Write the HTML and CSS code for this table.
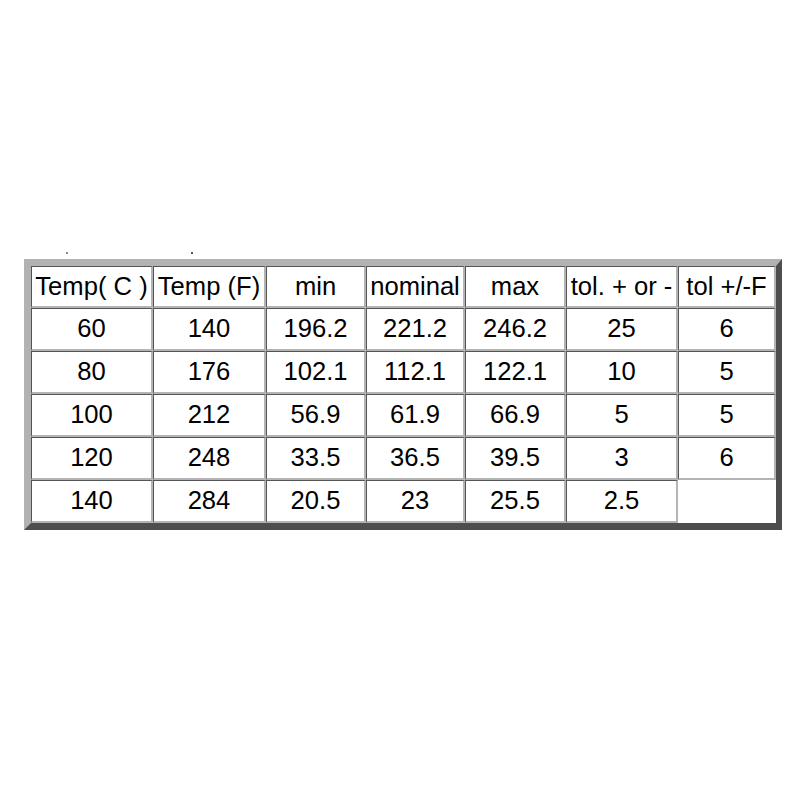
FILE: index.html
```html
<!DOCTYPE html>
<html>
<head>
<meta charset="utf-8">
<link rel="stylesheet" href="styles.css">
</head>
<body>
<div class="page">
  <div class="specks"><span class="speck s1"></span><span class="speck s2"></span></div>
  <table class="tol">
    <colgroup>
      <col class="c1"><col class="c2"><col class="c3"><col class="c4"><col class="c5"><col class="c6"><col class="c7">
    </colgroup>
    <tr class="head">
      <td>Temp( C )</td><td>Temp (F)</td><td>min</td><td>nominal</td><td>max</td><td>tol. + or -</td><td>tol +/-F</td>
    </tr>
    <tr><td>60</td><td>140</td><td>196.2</td><td>221.2</td><td>246.2</td><td>25</td><td>6</td></tr>
    <tr><td>80</td><td>176</td><td>102.1</td><td>112.1</td><td>122.1</td><td>10</td><td>5</td></tr>
    <tr><td>100</td><td>212</td><td>56.9</td><td>61.9</td><td>66.9</td><td>5</td><td>5</td></tr>
    <tr><td>120</td><td>248</td><td>33.5</td><td>36.5</td><td>39.5</td><td>3</td><td>6</td></tr>
    <tr><td>140</td><td>284</td><td>20.5</td><td>23</td><td>25.5</td><td>2.5</td><td class="empty"></td></tr>
  </table>
</div>
</body>
</html>
```

FILE: styles.css
```css
html, body {
  margin: 0;
  padding: 0;
  background: #ffffff;
}

.page {
  padding: 250px 0 0 24px;
}

.specks {
  display: flex;
  height: 9px;
  align-items: flex-start;
}

.speck {
  display: block;
  width: 2px;
  height: 2px;
  background: #8a8a8a;
}

.s1 {
  margin-left: 42px;
  margin-top: 2px;
}

.s2 {
  margin-left: 123px;
  margin-top: 2px;
  background: #555;
}

.tol {
  border-collapse: separate;
  border-spacing: 0;
  table-layout: fixed;
  width: 758px;
  border-style: solid;
  border-width: 7px 6px 7px 7px;
  border-color: #b2b2b2 #4e4e4e #4e4e4e #b2b2b2;
  background: #ffffff;
  font-family: "Liberation Sans", Arial, sans-serif;
  font-size: 25.6px;
  color: #000000;
}

.c1 { width: 122px; }
.c2 { width: 113px; }
.c3 { width: 100px; }
.c4 { width: 99px; }
.c5 { width: 101px; }
.c6 { width: 112px; }
.c7 { width: 98px; }

.tol td {
  padding: 0;
  height: 40px;
  text-align: center;
  vertical-align: middle;
  white-space: nowrap;
  overflow: hidden;
  border-style: solid;
  border-width: 1px 2px 2px 1px;
  border-color: #555555 #b4b4b4 #b4b4b4 #555555;
  line-height: 1;
}

.tol .head td {
  height: 39px;
}

.tol td.empty {
  border-color: #ffffff;
}
```
